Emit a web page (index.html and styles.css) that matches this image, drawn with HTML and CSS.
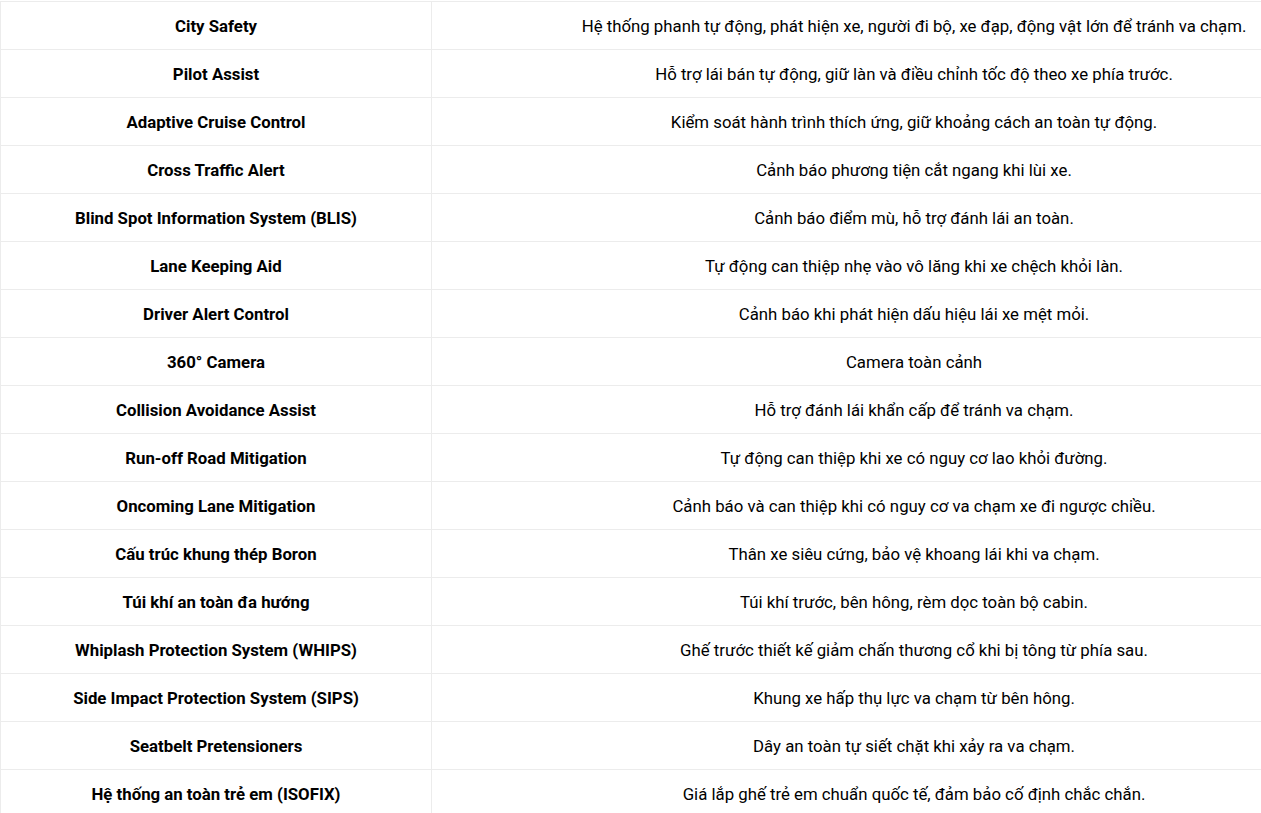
FILE: index.html
```html
<!DOCTYPE html>
<html lang="vi">
<head>
<meta charset="utf-8">
<title>Tính năng an toàn</title>
<link rel="stylesheet" href="styles.css">
</head>
<body>
<div class="wrap">
<table class="spec">
<colgroup><col class="c-name"><col class="c-desc"></colgroup>
<tbody>
<tr><th>City Safety</th><td>Hệ thống phanh tự động, phát hiện xe, người đi bộ, xe đạp, động vật lớn để tránh va chạm.</td></tr>
<tr><th>Pilot Assist</th><td>Hỗ trợ lái bán tự động, giữ làn và điều chỉnh tốc độ theo xe phía trước.</td></tr>
<tr><th>Adaptive Cruise Control</th><td>Kiểm soát hành trình thích ứng, giữ khoảng cách an toàn tự động.</td></tr>
<tr><th>Cross Traffic Alert</th><td>Cảnh báo phương tiện cắt ngang khi lùi xe.</td></tr>
<tr><th>Blind Spot Information System (BLIS)</th><td>Cảnh báo điểm mù, hỗ trợ đánh lái an toàn.</td></tr>
<tr><th>Lane Keeping Aid</th><td>Tự động can thiệp nhẹ vào vô lăng khi xe chệch khỏi làn.</td></tr>
<tr><th>Driver Alert Control</th><td>Cảnh báo khi phát hiện dấu hiệu lái xe mệt mỏi.</td></tr>
<tr><th>360° Camera</th><td>Camera toàn cảnh</td></tr>
<tr><th>Collision Avoidance Assist</th><td>Hỗ trợ đánh lái khẩn cấp để tránh va chạm.</td></tr>
<tr><th>Run-off Road Mitigation</th><td>Tự động can thiệp khi xe có nguy cơ lao khỏi đường.</td></tr>
<tr><th>Oncoming Lane Mitigation</th><td>Cảnh báo và can thiệp khi có nguy cơ va chạm xe đi ngược chiều.</td></tr>
<tr><th>Cấu trúc khung thép Boron</th><td>Thân xe siêu cứng, bảo vệ khoang lái khi va chạm.</td></tr>
<tr><th>Túi khí an toàn đa hướng</th><td>Túi khí trước, bên hông, rèm dọc toàn bộ cabin.</td></tr>
<tr><th>Whiplash Protection System (WHIPS)</th><td>Ghế trước thiết kế giảm chấn thương cổ khi bị tông từ phía sau.</td></tr>
<tr><th>Side Impact Protection System (SIPS)</th><td>Khung xe hấp thụ lực va chạm từ bên hông.</td></tr>
<tr><th>Seatbelt Pretensioners</th><td>Dây an toàn tự siết chặt khi xảy ra va chạm.</td></tr>
<tr><th>Hệ thống an toàn trẻ em (ISOFIX)</th><td>Giá lắp ghế trẻ em chuẩn quốc tế, đảm bảo cố định chắc chắn.</td></tr>
</tbody>
</table>
</div>
</body>
</html>
```

FILE: styles.css
```css
html, body {
  margin: 0;
  padding: 0;
  background: #fff;
  overflow: hidden;
}

.wrap {
  padding: 1px 0 0 0;
}

.spec {
  border-collapse: collapse;
  table-layout: fixed;
  width: 1396px;
  font-family: Roboto, "Noto Sans", sans-serif;
  font-size: 16.8px;
  color: #000;
}

.c-name { width: 431px; }
.c-desc { width: 965px; }

.spec th,
.spec td {
  height: 46px;
  padding: 1px 8px 0;
  border: 1px solid #ececec;
  text-align: center;
  vertical-align: middle;
  line-height: 20px;
  white-space: nowrap;
}

.spec th {
  font-weight: 700;
}

.spec td {
  font-weight: 400;
}
```
